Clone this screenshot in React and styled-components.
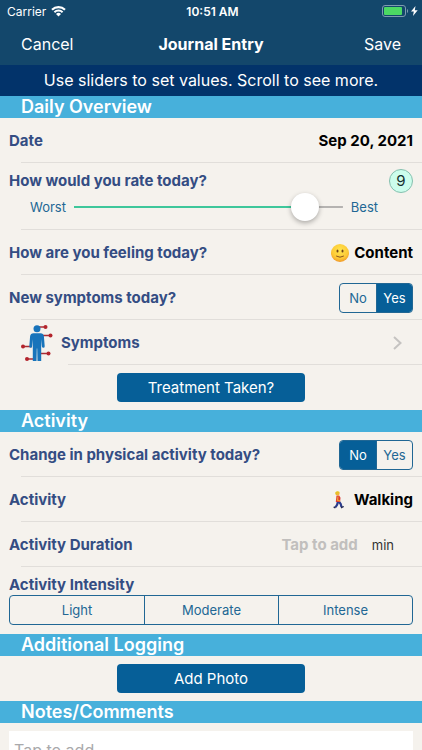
import React, { useState } from 'react'
import styled, { createGlobalStyle } from 'styled-components'

const GlobalStyle = createGlobalStyle`
  :root {
    --nav: #13476b;
    --hint: #02336a;
    --section: #47b0db;
    --primary: #065f98;
    --outline: #216794;
    --label: #344d83;
    --paper: #f5f2ed;
    --line: #e1deda;
  }

  * {
    box-sizing: border-box;
  }

  body {
    margin: 0;
    background: var(--paper);
    font-family: Inter, sans-serif;
    font-size: 16px;
  }

  button,
  input,
  textarea {
    font: inherit;
    color: inherit;
  }

  button {
    padding: 0;
    border: 0;
    background: none;
    cursor: pointer;
  }
`

const Screen = styled.div`
  display: flex;
  flex-direction: column;
  height: 100vh;
`

const StatusBar = styled.div`
  display: grid;
  grid-template-columns: 1fr auto 1fr;
  align-items: center;
  height: 22px;
  padding: 0 4px 0 7px;
  background: var(--nav);
  color: white;
  font-size: 12px;
`

const StatusGroup = styled.div`
  display: flex;
  align-items: center;
  justify-content: ${props => props.$end ? 'flex-end' : 'flex-start'};
  gap: 5px;
`

const Clock = styled.span`
  font-weight: 600;
`

const NavBar = styled.header`
  display: grid;
  grid-template-columns: 1fr auto 1fr;
  align-items: center;
  height: 43px;
  padding: 0 21px;
  background: var(--nav);
  color: white;
`

const NavTitle = styled.h1`
  margin: 0;
  font-size: 16px;
  font-weight: 700;
`

const NavButton = styled.button`
  justify-self: ${props => props.$end ? 'end' : 'start'};
`

const Hint = styled.p`
  margin: 0;
  background: var(--hint);
  color: white;
  font-size: 16px;
  line-height: 31px;
  text-align: center;
`

const Form = styled.form`
  flex: 1;
  min-height: 0;
  overflow-y: auto;
  scrollbar-width: none;
`

const SectionTitle = styled.h2`
  margin: 0;
  padding: 0 21px;
  background: var(--section);
  color: white;
  font-size: 18px;
  font-weight: 600;
  line-height: 22px;
`

const Row = styled.div`
  display: flex;
  align-items: center;
  justify-content: space-between;
  height: 45px;
  padding: 0 9px;
  background: linear-gradient(var(--line), var(--line)) no-repeat
    ${props => props.$inset || '21px'} 100% / 100% ${props => props.$last ? '0' : '1px'};
`

const StackedRow = styled(Row)`
  flex-direction: column;
  align-items: stretch;
  justify-content: flex-start;
  height: 67px;
  padding-top: ${props => props.$last ? '8px' : '6px'};
`

const RowHead = styled.div`
  display: flex;
  align-items: center;
  justify-content: space-between;
`

const Label = styled.label`
  color: var(--label);
  font-size: 15px;
  font-weight: 700;
  line-height: 20px;
`

const Value = styled.button`
  display: flex;
  align-items: center;
  gap: 5px;
  color: black;
  font-size: 15px;
  font-weight: 700;
`

const Rating = styled.output`
  width: 24px;
  height: 24px;
  border: 1px solid #86bfae;
  border-radius: 50%;
  background: #ccfdec;
  color: #16302f;
  font-size: 15px;
  line-height: 22px;
  text-align: center;
`

const SliderLine = styled.div`
  display: flex;
  align-items: center;
  gap: 8px;
  padding: 0 35px 0 21px;
  color: var(--outline);
  font-size: 13px;
`

const Slider = styled.input`
  flex: 1;
  min-width: 0;
  height: 28px;
  margin: 0;
  appearance: none;
  background: linear-gradient(to right, #3ec79b ${props => props.value * 10}%, #b5b3b1 0)
    no-repeat center / 100% 2px;

  &::-webkit-slider-thumb {
    appearance: none;
    width: 28px;
    height: 28px;
    border-radius: 50%;
    background: white;
    box-shadow: 0 2px 5px rgba(0, 0, 0, 0.3);
  }
`

const Segments = styled.div`
  display: grid;
  grid-auto-flow: column;
  grid-auto-columns: 1fr;
  width: ${props => props.$wide ? 'auto' : '74px'};
  height: 30px;
  border: 1px solid var(--outline);
  border-radius: 4px;
  overflow: hidden;
`

const Segment = styled.label`
  position: relative;
  display: flex;
  align-items: center;
  justify-content: center;
  color: var(--outline);
  font-size: 13px;
  cursor: pointer;

  & + & {
    border-left: 1px solid var(--outline);
  }

  &:has(input:checked) {
    background: var(--primary);
    color: white;
  }

  input {
    position: absolute;
    inset: 0;
    margin: 0;
    opacity: 0;
    cursor: pointer;
  }
`

const SymptomsLink = styled.a`
  display: flex;
  flex: 1;
  align-items: center;
  gap: 8px;
  padding: 0 11px 0 12px;
  color: var(--label);
  font-size: 15px;
  font-weight: 700;
  text-decoration: none;

  span {
    flex: 1;
  }
`

const ButtonRow = styled.div`
  display: flex;
  justify-content: center;
  padding: 8px 0;
`

const ActionButton = styled.button`
  width: 188px;
  height: 29px;
  border-radius: 4px;
  background: var(--primary);
  color: white;
  font-size: 15px;
`

const Duration = styled.div`
  display: flex;
  align-items: center;
  gap: 14px;
  padding-right: 19px;
  color: #333;
  font-size: 13px;
`

const DurationInput = styled.input`
  width: 100px;
  padding: 0;
  border: 0;
  background: none;
  font-size: 15px;
  font-weight: 700;
  text-align: right;

  &::placeholder {
    color: #c1bfbd;
  }
`

const NotesArea = styled.div`
  padding: 8px 9px;
`

const Notes = styled.textarea`
  display: block;
  width: 100%;
  height: 120px;
  padding: 9px 5px;
  border: 0;
  background: white;
  font-size: 16px;
  line-height: 20px;
  resize: none;

  &::placeholder {
    color: #a9a9ab;
  }
`

const WifiIcon = () => (
  <svg width="15" height="11" viewBox="0 0 15 11" fill="none" stroke="white">
    <path d="M1 3.8a9.2 9.2 0 0 1 13 0" strokeWidth="2.2" />
    <path d="M3.4 6.3a5.8 5.8 0 0 1 8.2 0" strokeWidth="2" />
    <path d="M7.5 10.6 5 8.1a3.5 3.5 0 0 1 5 0Z" fill="white" stroke="none" />
  </svg>
)

const BatteryIcon = () => (
  <svg width="36" height="12" viewBox="0 0 36 12">
    <rect x="0.5" y="0.5" width="23" height="11" rx="2.5" fill="none" stroke="#7f9bb0" />
    <rect x="2" y="2" width="18" height="8" rx="1" fill="#4cd964" />
    <path d="M25 4c1.5 .5 1.5 3.5 0 4Z" fill="#7f9bb0" />
    <path d="m33.5 1-4.5 5.5h2.800L31 11l4.700-5.700h-2.900Z" fill="white" />
  </svg>
)

const SmileIcon = () => (
  <svg width="18" height="18" viewBox="0 0 18 18">
    <defs>
      <radialGradient id="face" cx="50%" cy="35%" r="65%">
        <stop offset="0" stopColor="#ffe64f" />
        <stop offset="0.7" stopColor="#fdc835" />
        <stop offset="1" stopColor="#f0982a" />
      </radialGradient>
    </defs>
    <circle cx="9" cy="9" r="9" fill="url(#face)" />
    <ellipse cx="6.5" cy="7" rx="1" ry="1.600" fill="#70421a" />
    <ellipse cx="11.5" cy="7" rx="1" ry="1.600" fill="#70421a" />
    <path d="M5.500 12.200q3.500 2.200 7 0" fill="none" stroke="#8a5420" strokeWidth="1" strokeLinecap="round" />
  </svg>
)

const WalkerIcon = () => (
  <svg width="18" height="18" viewBox="0 0 18 18">
    <path d="m7 10-.8 3.500-1.700 2.800M7.500 10l2.200 3 .8 3" fill="none" stroke="#2c3c8c" strokeWidth="2.200" />
    <path d="m3 15.200 2 1.300-1 1.100-1.700-1.200ZM9.800 15.800l2.700-.8.500 1-2.800 1.600Z" fill="#242a52" />
    <path d="M5.500 4.500h2.700l1.300 2.300-.5 4.200H4.800Z" fill="#dd3b35" />
    <path d="m7 5.500-.5 3.700 2.700.8" fill="none" stroke="#f0a02c" strokeWidth="1.200" />
    <circle cx="6.700" cy="2.600" r="1.900" fill="#f3b33a" />
    <path d="M4.200 1.500Q6.200-.6 8.700 1L8.200 2H6.400L5.700 4 4.500 3.500Z" fill="#e5c226" />
  </svg>
)

const BodyIcon = () => (
  <svg width="32" height="38" viewBox="0 0 32 38">
    <g stroke="#a92d35" strokeWidth="1.500" fill="#b3242c">
      <path d="M17 3h7.500M21 11.500h8.500M3 22.500h8M18 29.500h9M7 35h8" />
      <g stroke="none">
        <circle cx="24.500" cy="3" r="2" />
        <circle cx="29.500" cy="11.500" r="2" />
        <circle cx="2" cy="22.500" r="2" />
        <circle cx="27.500" cy="29.500" r="2" />
        <circle cx="6" cy="35" r="2" />
      </g>
    </g>
    <g fill="#1874bb">
      <circle cx="16" cy="4.800" r="3.500" />
      <path d="M12.500 9.200h7q3 0 3.400 3l.8 10q0 1.500-1.300 1.500t-1.500-1.300l-.7-7.200V37h-3.700l-.3-12.500h-.4L15.500 37h-3.700V15.200l-.7 7.200Q10.900 23.700 9.600 23.700t-1.300-1.500l.8-10q.4-3 3.400-3Z" />
    </g>
  </svg>
)

const ChevronIcon = () => (
  <svg width="9" height="14" viewBox="0 0 9 14" fill="none" stroke="#c5c3c1" strokeWidth="2">
    <path d="m1 1 6.500 6L1 13" />
  </svg>
)

const SegmentedControl = ({ name, label, options, value, onChange, wide }) => (
  <Segments role="radiogroup" aria-label={label} $wide={wide}>
    {options.map(option => (
      <Segment key={option}>
        <input
          type="radio"
          name={name}
          value={option}
          checked={value === option}
          onChange={() => onChange(option)}
        />
        {option}
      </Segment>
    ))}
  </Segments>
)

const App = () => {
  const [rating, setRating] = useState(9)
  const [newSymptoms, setNewSymptoms] = useState('Yes')
  const [activityChange, setActivityChange] = useState('No')
  const [intensity, setIntensity] = useState('')

  return (
    <Screen>
      <GlobalStyle />
      <StatusBar>
        <StatusGroup>
          <span>Carrier</span>
          <WifiIcon />
        </StatusGroup>
        <Clock>10:51 AM</Clock>
        <StatusGroup $end>
          <BatteryIcon />
        </StatusGroup>
      </StatusBar>

      <NavBar>
        <NavButton type="button">Cancel</NavButton>
        <NavTitle>Journal Entry</NavTitle>
        <NavButton type="submit" form="journal" $end>Save</NavButton>
      </NavBar>
      <Hint>Use sliders to set values. Scroll to see more.</Hint>

      <Form id="journal" onSubmit={e => e.preventDefault()}>
        <SectionTitle>Daily Overview</SectionTitle>
        <Row>
          <Label htmlFor="date">Date</Label>
          <Value id="date" type="button">Sep 20, 2021</Value>
        </Row>
        <StackedRow>
          <RowHead>
            <Label htmlFor="rating">How would you rate today?</Label>
            <Rating htmlFor="rating">{rating}</Rating>
          </RowHead>
          <SliderLine>
            <span>Worst</span>
            <Slider
              id="rating"
              type="range"
              min="0"
              max="10"
              value={rating}
              onChange={e => setRating(Number(e.target.value))}
            />
            <span>Best</span>
          </SliderLine>
        </StackedRow>
        <Row>
          <Label htmlFor="feeling">How are you feeling today?</Label>
          <Value id="feeling" type="button"><SmileIcon />Content</Value>
        </Row>
        <Row>
          <Label as="span">New symptoms today?</Label>
          <SegmentedControl
            name="symptoms"
            label="New symptoms today?"
            options={['No', 'Yes']}
            value={newSymptoms}
            onChange={setNewSymptoms}
          />
        </Row>
        <Row $inset="68px">
          <SymptomsLink href="#symptoms">
            <BodyIcon />
            <span>Symptoms</span>
            <ChevronIcon />
          </SymptomsLink>
        </Row>
        <ButtonRow>
          <ActionButton type="button">Treatment Taken?</ActionButton>
        </ButtonRow>

        <SectionTitle>Activity</SectionTitle>
        <Row>
          <Label as="span">Change in physical activity today?</Label>
          <SegmentedControl
            name="activity-change"
            label="Change in physical activity today?"
            options={['No', 'Yes']}
            value={activityChange}
            onChange={setActivityChange}
          />
        </Row>
        <Row>
          <Label htmlFor="activity">Activity</Label>
          <Value id="activity" type="button"><WalkerIcon />Walking</Value>
        </Row>
        <Row>
          <Label htmlFor="duration">Activity Duration</Label>
          <Duration>
            <DurationInput id="duration" inputMode="numeric" placeholder="Tap to add" />
            <span>min</span>
          </Duration>
        </Row>
        <StackedRow $last>
          <Label as="span">Activity Intensity</Label>
          <SegmentedControl
            name="intensity"
            label="Activity Intensity"
            options={['Light', 'Moderate', 'Intense']}
            value={intensity}
            onChange={setIntensity}
            wide
          />
        </StackedRow>

        <SectionTitle>Additional Logging</SectionTitle>
        <ButtonRow>
          <ActionButton type="button">Add Photo</ActionButton>
        </ButtonRow>

        <SectionTitle id="notes-title">Notes/Comments</SectionTitle>
        <NotesArea>
          <Notes aria-labelledby="notes-title" placeholder="Tap to add" />
        </NotesArea>
      </Form>
    </Screen>
  )
}

export default App
